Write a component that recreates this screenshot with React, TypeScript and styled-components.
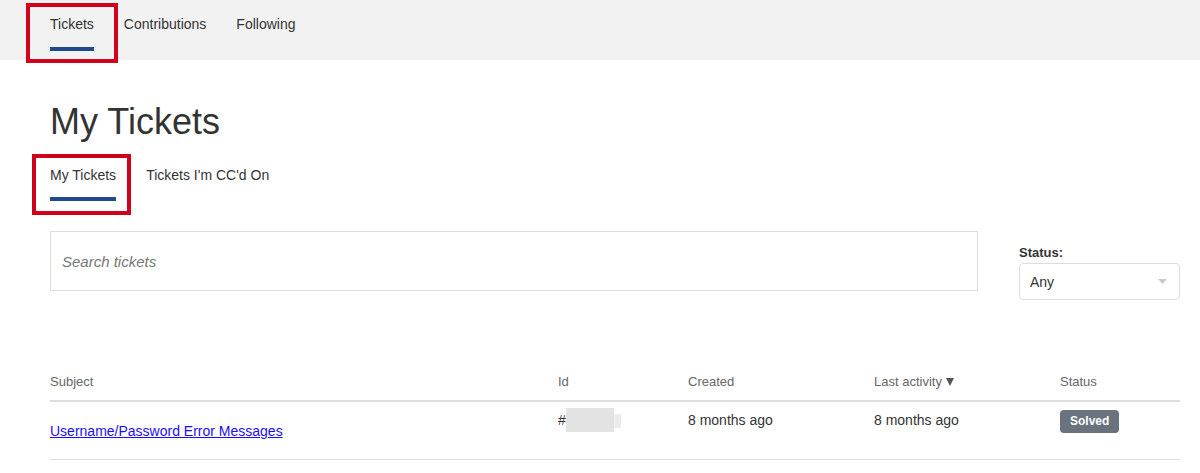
import React from "react";
import styled, { createGlobalStyle } from "styled-components";

const GlobalStyle = createGlobalStyle`
  html, body {
    margin: 0;
    padding: 0;
    background: #ffffff;
  }
  body {
    font-family: "Liberation Sans", Arial, sans-serif;
    color: #333333;
  }
  * { box-sizing: border-box; }
`;

const TopNav = styled.nav`
  display: flex;
  gap: 30px;
  height: 60px;
  padding: 0 50px;
  background: #f2f2f2;
`;

const NavItem = styled.a<{ $active?: boolean }>`
  position: relative;
  display: flex;
  flex-direction: column;
  gap: 13px;
  padding-top: 14px;
  font-size: 14px;
  line-height: 20px;
  color: #333333;
  text-decoration: none;
  cursor: pointer;
`;

const Underline = styled.span`
  display: block;
  height: 4px;
  width: 100%;
  background: #1f4a8c;
`;

const Highlight = styled.span<{ $l: number; $r: number; $t: number; $b: number }>`
  position: absolute;
  left: ${(p) => p.$l}px;
  right: ${(p) => p.$r}px;
  top: ${(p) => p.$t}px;
  bottom: ${(p) => p.$b}px;
  border: 4px solid #d0021b;
  pointer-events: none;
  z-index: 2;
`;

const Main = styled.main`
  padding: 0 20px 0 50px;
`;

const Title = styled.h1`
  margin: 42px 0 0;
  font-size: 36px;
  line-height: 40px;
  font-weight: normal;
  color: #333333;
`;

const SubTabs = styled.div`
  display: flex;
  gap: 30px;
  margin-top: 23px;
`;

const SubTab = styled.a`
  position: relative;
  display: flex;
  flex-direction: column;
  gap: 12px;
  font-size: 14px;
  line-height: 20px;
  color: #333333;
  text-decoration: none;
  cursor: pointer;
`;

const SearchRow = styled.div`
  display: flex;
  align-items: flex-start;
  gap: 41px;
  margin-top: 30px;
`;

const SearchInput = styled.input`
  flex: 1;
  height: 60px;
  padding: 0 11px;
  border: 1px solid #dddddd;
  border-radius: 0;
  font-family: "Liberation Sans", Arial, sans-serif;
  font-size: 15px;
  color: #333333;
  outline: none;
  &::placeholder {
    color: #777777;
    font-style: italic;
  }
`;

const Filter = styled.div`
  width: 161px;
  margin-top: 14px;
  display: flex;
  flex-direction: column;
  gap: 2px;
`;

const FilterLabel = styled.label`
  font-size: 13px;
  line-height: 16px;
  font-weight: bold;
  color: #333333;
`;

const SelectBox = styled.div`
  height: 37px;
  display: flex;
  align-items: center;
  justify-content: space-between;
  padding: 0 12px 0 10px;
  border: 1px solid #dddddd;
  border-radius: 4px;
  font-size: 14px;
  color: #333333;
  background: #ffffff;
`;

const Table = styled.table`
  width: 100%;
  margin-top: 72px;
  border-collapse: collapse;
  table-layout: fixed;
`;

const Th = styled.th`
  padding: 0 0 8px;
  text-align: left;
  font-size: 13px;
  line-height: 20px;
  font-weight: normal;
  color: #666666;
  border-bottom: 2px solid #dddddd;
`;

const Td = styled.td<{ $top?: number; $bottom?: number }>`
  padding: ${(p) => p.$top ?? 8}px 0 ${(p) => p.$bottom ?? 0}px;
  vertical-align: top;
  font-size: 14px;
  line-height: 20px;
  color: #333333;
  border-bottom: 1px solid #dddddd;
`;

const SubjectLink = styled.a`
  color: #1a0dff;
  text-decoration: underline;
  cursor: pointer;
`;

const IdWrap = styled.div`
  display: flex;
  align-items: flex-start;
`;

const Redact = styled.span<{ $w: number; $h: number; $top: number; $c: string }>`
  display: block;
  width: ${(p) => p.$w}px;
  height: ${(p) => p.$h}px;
  margin-top: ${(p) => p.$top}px;
  background: ${(p) => p.$c};
`;

const SortArrow = styled.svg`
  margin-left: 4px;
  vertical-align: 0px;
`;

const Badge = styled.span`
  display: block;
  width: fit-content;
  height: 23px;
  padding: 0 10px;
  border-radius: 4px;
  background: #68737d;
  color: #ffffff;
  font-size: 12px;
  line-height: 23px;
  font-weight: bold;
`;

export default function App() {
  return (
    <>
      <GlobalStyle />
      <TopNav>
        <NavItem $active>
          Tickets
          <Underline />
          <Highlight $l={-24} $r={-24} $t={3} $b={-3} />
        </NavItem>
        <NavItem>Contributions</NavItem>
        <NavItem>Following</NavItem>
      </TopNav>
      <Main>
        <Title>My Tickets</Title>
        <SubTabs>
          <SubTab>
            My Tickets
            <Underline />
            <Highlight $l={-18} $r={-15} $t={-11} $b={-14} />
          </SubTab>
          <SubTab>Tickets I'm CC'd On</SubTab>
        </SubTabs>
        <SearchRow>
          <SearchInput type="search" placeholder="Search tickets" />
          <Filter>
            <FilterLabel>Status:</FilterLabel>
            <SelectBox>
              <span>Any</span>
              <svg width="9" height="5" viewBox="0 0 9 5">
                <path d="M0 0 L9 0 L4.5 5 Z" fill="#c8c8c8" />
              </svg>
            </SelectBox>
          </Filter>
        </SearchRow>
        <Table>
          <colgroup>
            <col style={{ width: 508 }} />
            <col style={{ width: 130 }} />
            <col style={{ width: 186 }} />
            <col style={{ width: 186 }} />
            <col style={{ width: 120 }} />
          </colgroup>
          <thead>
            <tr>
              <Th>Subject</Th>
              <Th>Id</Th>
              <Th>Created</Th>
              <Th>
                Last activity
                <SortArrow width="8" height="8" viewBox="0 0 8 8">
                  <path d="M0 0 L8 0 L4 8 Z" fill="#555555" />
                </SortArrow>
              </Th>
              <Th>Status</Th>
            </tr>
          </thead>
          <tbody>
            <tr>
              <Td $top={19} $bottom={18}>
                <SubjectLink>Username/Password Error Messages</SubjectLink>
              </Td>
              <Td>
                <IdWrap>
                  <span>#</span>
                  <Redact $w={48} $h={24} $top={-2} $c="#e3e3e3" />
                  <Redact $w={7} $h={14} $top={4} $c="#ececec" />
                </IdWrap>
              </Td>
              <Td>8 months ago</Td>
              <Td>8 months ago</Td>
              <Td>
                <Badge>Solved</Badge>
              </Td>
            </tr>
          </tbody>
        </Table>
      </Main>
    </>
  );
}
